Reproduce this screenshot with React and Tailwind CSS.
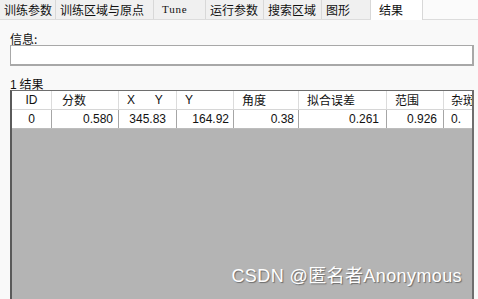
import React from "react";

const cjk = { fontFamily: '"Noto Sans CJK SC", "Noto Sans", sans-serif' };
const num = { fontFamily: '"Liberation Sans", Arial, sans-serif' };

const tabs = [
  { t: "训练参数", w: 56 },
  { t: "训练区域与原点", w: 98 },
  { t: "Tune", w: 52, mono: true },
  { t: "运行参数", w: 58 },
  { t: "搜索区域", w: 58 },
  { t: "图形", w: 49 },
];

const cols = [
  { h: "ID", w: 40, v: "0", hc: "justify-center", vc: "justify-center" },
  { h: "分数", w: 67, v: "0.580", hc: "pl-[10px]", vc: "justify-end pr-[5px]" },
  { h: "X      Y", w: 58, v: "345.83", hc: "pl-[8px]", vc: "justify-end pr-[10px]" },
  { h: "Y", w: 57, v: "164.92", hc: "pl-[8px]", vc: "justify-end pr-[4px]" },
  { h: "角度", w: 65, v: "0.38", hc: "pl-[8px]", vc: "justify-end pr-[4px]" },
  { h: "拟合误差", w: 88, v: "0.261", hc: "pl-[8px]", vc: "justify-end pr-[7px]" },
  { h: "范围", w: 57, v: "0.926", hc: "pl-[8px]", vc: "justify-end pr-[6px]" },
  { h: "杂斑", w: 40, v: "0.", hc: "pl-[7px]", vc: "pl-[7px]" },
];

export default function App() {
  return (
    <div className="w-[478px] h-[299px] overflow-hidden bg-[#f9f9f9] flex flex-col text-[12px] text-[#111]" style={cjk}>
      <div className="flex h-[20px] bg-[#fbfbfb] border-b border-[#dcdcdc] shrink-0">
        {tabs.map((tb) => (
          <div
            key={tb.t}
            className="h-[19px] bg-[#f0f0f0] border-r border-[#d8d8d8] flex items-center pl-[4px] shrink-0 leading-none"
            style={{ width: tb.w, ...(tb.mono ? { fontFamily: '"Liberation Serif", "Times New Roman", serif', fontSize: 11, fontWeight: 500, paddingLeft: 8, letterSpacing: 0.8 } : {}) }}
          >
            {tb.t}
          </div>
        ))}
        <div className="w-[52px] h-[20px] bg-white border-r border-[#d8d8d8] flex items-center pl-[8px] -mb-px leading-none shrink-0">
          结果
        </div>
      </div>

      <div className="pl-[10px] pr-[4px] flex flex-col">
        <div className="mt-[13px] leading-none h-[12px]">信息:</div>
        <div className="h-[21px] border border-[#a8a8a8] border-r-2 border-b-2 bg-white" />
        <div className="mt-[12px] leading-none h-[12px]" >
          <span style={num}>1</span> 结果
        </div>
        <div className="h-[210px] border-t border-[#6e6e6e] border-l-2 border-l-[#5a5a5a] border-r-2 border-r-[#6e6e6e] bg-[#b4b4b4] flex flex-col overflow-hidden">
          <div className="flex h-[19px] bg-white border-b border-[#d6d6d6]">
            {cols.map((c, i) => (
              <div key={i} className={`h-full flex items-center shrink-0 border-r border-[#dcdcdc] ${c.hc}`} style={{ width: c.w }}>
                <span style={c.h === "ID" || c.h.startsWith("X") || c.h === "Y" ? num : cjk} className="whitespace-pre">{c.h}</span>
              </div>
            ))}
          </div>
          <div className="flex h-[19px] bg-white border-b border-[#bdbdbd]">
            {cols.map((c, i) => (
              <div key={i} className={`h-full flex items-center shrink-0 border-r border-[#a6a6a6] ${c.vc}`} style={{ width: c.w, ...num }}>
                {c.v}
              </div>
            ))}
          </div>
          <div className="flex-1 relative">
            <div className="absolute right-[10px] top-[134px] text-[18px] tracking-[0.4px] text-white whitespace-nowrap" style={{ fontFamily: '"Liberation Sans", "Noto Sans CJK SC", sans-serif', textShadow: "1px 1px 1px #6b6b6b" }}>
              CSDN @匿名者Anonymous
            </div>
          </div>
        </div>
      </div>
    </div>
  );
}
